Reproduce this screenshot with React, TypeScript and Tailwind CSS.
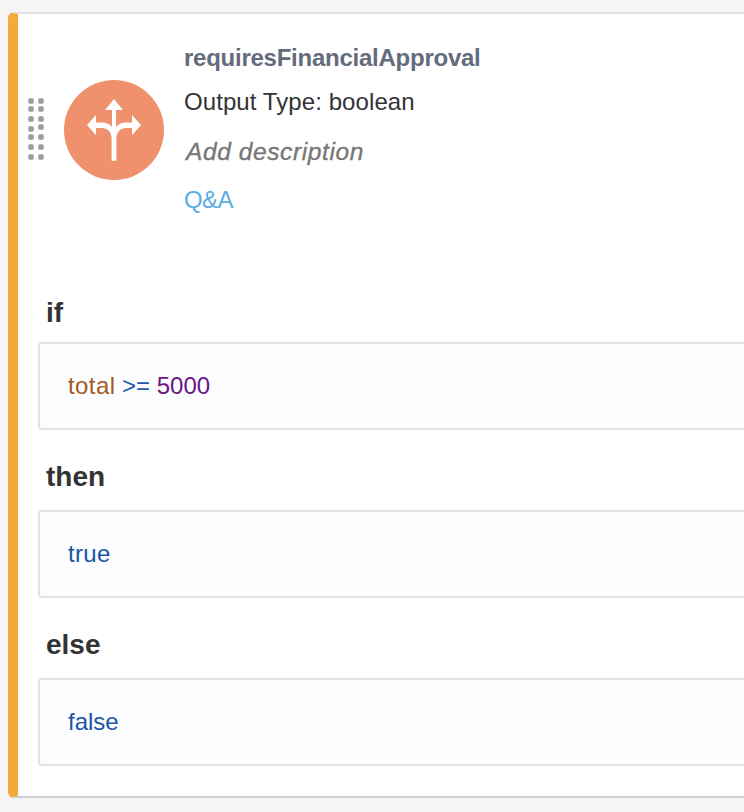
import type { ReactNode } from "react";

const DOTS: [number, number][] = [
  [3, 3], [3, 11], [3, 21], [3, 31], [3, 39], [3, 49], [3, 59],
  [13, 3], [13, 11], [13, 21], [13, 29], [13, 39], [13, 49], [13, 59],
];

function DragHandle() {
  return (
    <svg className="mt-[54px] h-[62px] w-4 shrink-0" viewBox="0 0 16 62">
      {DOTS.map(([x, y]) => (
        <g key={`${x}-${y}`}>
          <rect x={x - 3} y={y - 3} width="6" height="6" rx="1.5" fill="#d2d2d2" />
          <circle cx={x} cy={y} r="2.7" fill="#9c9c9c" />
        </g>
      ))}
    </svg>
  );
}

function DecisionIcon() {
  return (
    <svg className="mt-9 ml-5 size-[100px] shrink-0" viewBox="0 0 100 100">
      <circle cx="50" cy="50" r="50" fill="#f0916e" />
      <path
        fill="#fff"
        d="M50 19 58.8 30H52V47C54.5 44 58 42.6 62.5 42.6H68V34.9L77 44.9 68 55.2V48.1H62.5C56 48.1 52.4 52.5 52.4 59V80.8H47.6V59C47.6 52.5 44 48.1 37.5 48.1H32V55.2L23 44.9 32 34.9V42.6H37.5C42 42.6 45.5 44 48 47V30H41.2Z"
      />
    </svg>
  );
}

function Clause({ label, className, children }: { label: string; className: string; children: ReactNode }) {
  return (
    <section className={`flex flex-col ${className}`}>
      <h2 className="pl-2 text-[28px] leading-8 font-bold text-[#333]">{label}</h2>
      <div className="flex h-[88px] items-center rounded-l-[4px] border-2 border-r-0 border-[#e0e2e5] bg-[#fcfdff] pl-7 text-2xl leading-7">
        {children}
      </div>
    </section>
  );
}

export default function App() {
  return (
    <div className="h-[812px] overflow-hidden bg-[#f5f5f5] pt-3 pl-2 font-['Liberation_Sans',Arial,sans-serif]">
      <main className="h-[786px] rounded-l-[6px] border-y-2 border-l-[10px] border-t-[#e2e3ea] border-b-[#cdcdd3] border-l-[#f3a93c] bg-white">
        <header className="flex h-[283px] pt-[30px] pl-[10px]">
          <DragHandle />
          <DecisionIcon />
          <div className="ml-5 flex flex-col text-2xl leading-7 whitespace-nowrap">
            <h1 className="font-bold tracking-[-0.25px] text-[#646b7c]">requiresFinancialApproval</h1>
            <p className="mt-4 tracking-[0.08px] text-[#333]">Output Type: boolean</p>
            <p className="mt-[22px] pl-[2px] text-[24.5px] tracking-[0.6px] text-[#777] italic [-webkit-text-stroke:0.35px_#777]">
              Add description
            </p>
            <a className="mt-5 tracking-[-0.6px] text-[#5dade2]">Q&amp;A</a>
          </div>
        </header>
        <div className="pl-5">
          <Clause label="if" className="gap-[13px]">
            <span className="whitespace-pre">
              <span className="tracking-[0.4px] text-[#a35a1f]">total</span>{" "}
              <span className="text-[#2459a9]">&gt;=</span>{" "}
              <span className="text-[#6a1485]">5000</span>
            </span>
          </Clause>
          <Clause label="then" className="mt-[31px] gap-[17px]">
            <span className="tracking-[0.3px] text-[#2053a4]">true</span>
          </Clause>
          <Clause label="else" className="mt-[31px] gap-[17px]">
            <span className="text-[#2053a4]">false</span>
          </Clause>
        </div>
      </main>
    </div>
  );
}
